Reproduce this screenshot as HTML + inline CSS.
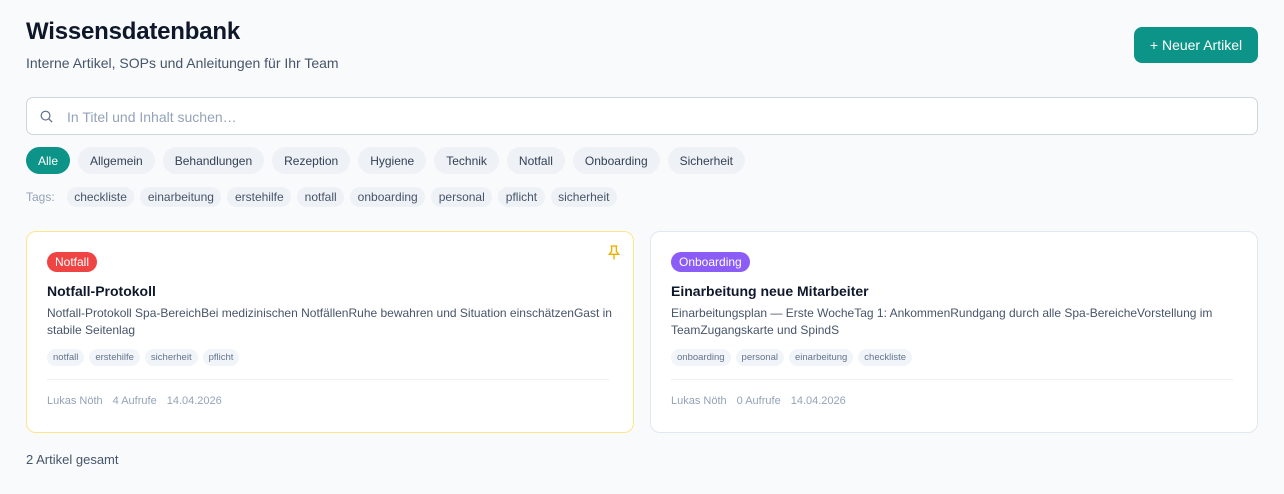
<!DOCTYPE html>
<html><head><meta charset="utf-8"><style>
*{box-sizing:border-box;margin:0;padding:0}
body{width:1284px;height:494px;background:#f8fafc;font-family:"Liberation Sans",sans-serif;color:#0f172a;position:relative;overflow:hidden}
.abs{position:absolute}
h1{position:absolute;left:26px;top:18px;font-size:24px;font-weight:700;letter-spacing:-0.2px}
.sub{left:26px;top:55px;font-size:14px;color:#475569}
.btn{left:1134px;top:27px;width:124px;height:36px;background:#0d9488;color:#fff;border-radius:8px;font-size:14px;display:flex;align-items:center;justify-content:center}
.search{left:26px;top:97px;width:1232px;height:38px;border:1px solid #d1d5db;border-radius:7px;background:#fff}
.search span{position:absolute;left:40px;top:11px;font-size:14px;color:#94a3b8}
.chips{left:26px;top:147px;display:flex;gap:8px}
.chip{height:27px;padding:0 12px;border-radius:14px;background:#eef1f5;color:#334155;font-size:12px;display:flex;align-items:center}
.chip.on{background:#0d9488;color:#fff}
.tags{left:26px;top:187px;display:flex;gap:6px;align-items:center}
.tag{height:20px;padding:0 7.5px;border-radius:10px;background:#eef1f5;color:#475569;font-size:12px;display:flex;align-items:center}
.card{top:231px;width:608px;height:202px;background:#fff;border:1px solid #e2e8f0;border-radius:10px}
.card.pin{border-color:#fde68a}
.badge{position:absolute;left:20px;top:20px;height:20px;padding:0 8px;border-radius:10px;color:#fff;font-size:12px;display:flex;align-items:center}
.title{position:absolute;left:20px;top:51px;font-size:14px;font-weight:700}
.desc{position:absolute;left:20px;top:73px;width:570px;font-size:12px;line-height:17px;color:#475569}
.ct{position:absolute;left:20px;top:117px;display:flex;gap:5px}
.ct div{height:17px;padding:0 6px;border-radius:9px;background:#f1f5f9;color:#64748b;font-size:9.5px;display:flex;align-items:center}
.hr{position:absolute;left:20px;right:24px;top:147px;border-top:1px solid #eef1f5}
.meta{position:absolute;left:20px;top:163px;font-size:11px;color:#94a3b8}
.meta span{margin-right:10px}
.foot{left:26px;top:452px;font-size:13px;color:#475569}
</style></head><body>
<h1>Wissensdatenbank</h1>
<div class="abs sub">Interne Artikel, SOPs und Anleitungen für Ihr Team</div>
<div class="abs btn">+ Neuer Artikel</div>
<div class="abs search"><svg class="abs" style="left:12px;top:11px" width="15" height="15" viewBox="0 0 24 24" fill="none" stroke="#64748b" stroke-width="2"><circle cx="10.5" cy="10.5" r="7"/><path d="M16 16l5 5"/></svg><span>In Titel und Inhalt suchen…</span></div>
<div class="abs chips"><div class="chip on">Alle</div><div class="chip">Allgemein</div><div class="chip">Behandlungen</div><div class="chip">Rezeption</div><div class="chip">Hygiene</div><div class="chip">Technik</div><div class="chip">Notfall</div><div class="chip">Onboarding</div><div class="chip">Sicherheit</div></div>
<div class="abs tags"><span style="font-size:12px;color:#94a3b8;margin-right:6px">Tags:</span><div class="tag">checkliste</div><div class="tag">einarbeitung</div><div class="tag">erstehilfe</div><div class="tag">notfall</div><div class="tag">onboarding</div><div class="tag">personal</div><div class="tag">pflicht</div><div class="tag">sicherheit</div></div>
<div class="abs card pin" style="left:26px">
<svg class="abs" style="left:580px;top:12px" width="14" height="17" viewBox="0 0 24 28" fill="none" stroke="#eab308" stroke-width="2.4"><path d="M6 3h12M8 3v9l-4 5h16l-4-5V3M12 17v9"/></svg>
<div class="badge" style="background:#ef4444">Notfall</div>
<div class="title">Notfall-Protokoll</div>
<div class="desc">Notfall-Protokoll Spa-BereichBei medizinischen NotfällenRuhe bewahren und Situation einschätzenGast in stabile Seitenlag</div>
<div class="ct"><div>notfall</div><div>erstehilfe</div><div>sicherheit</div><div>pflicht</div></div>
<div class="hr"></div>
<div class="meta"><span>Lukas Nöth</span><span>4 Aufrufe</span><span>14.04.2026</span></div>
</div>
<div class="abs card" style="left:650px">
<div class="badge" style="background:#8b5cf6">Onboarding</div>
<div class="title">Einarbeitung neue Mitarbeiter</div>
<div class="desc">Einarbeitungsplan — Erste WocheTag 1: AnkommenRundgang durch alle Spa-BereicheVorstellung im TeamZugangskarte und SpindS</div>
<div class="ct"><div>onboarding</div><div>personal</div><div>einarbeitung</div><div>checkliste</div></div>
<div class="hr"></div>
<div class="meta"><span>Lukas Nöth</span><span>0 Aufrufe</span><span>14.04.2026</span></div>
</div>
<div class="abs foot">2 Artikel gesamt</div>
</body></html>
